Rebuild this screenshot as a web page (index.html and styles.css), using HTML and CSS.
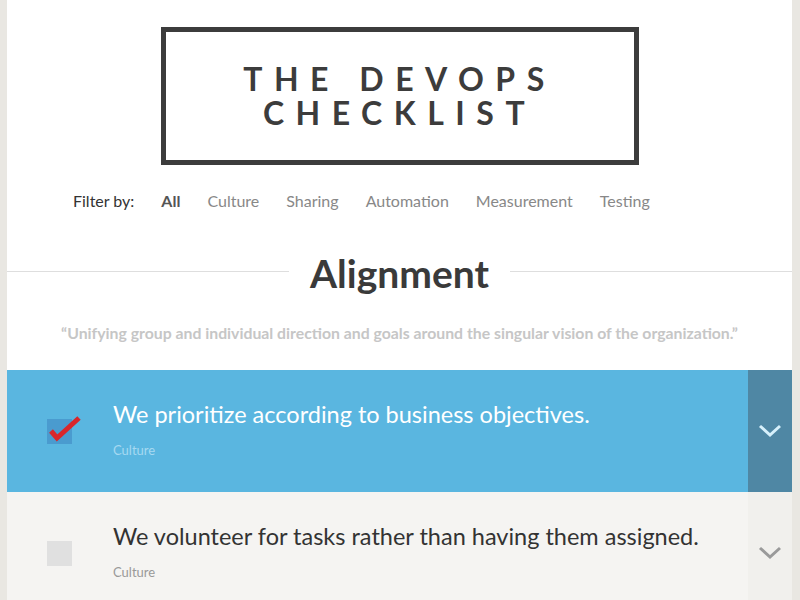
FILE: index.html
```html
<!DOCTYPE html>
<html lang="en">

<head>
    <meta charset="UTF-8">
    <meta name="viewport" content="width=device-width, initial-scale=1.0">
    <title>The DevOps Checklist</title>
    <link rel="stylesheet" href="styles.css">
</head>

<body>

    <div class="page">
        <header>
            <div class="logo-box">
                <h1><span>The DevOps</span><span>Checklist</span></h1>
            </div>
        </header>

        <nav class="filters">
            <span class="filter-label">Filter by:</span>
            <a class="active">All</a>
            <a>Culture</a>
            <a>Sharing</a>
            <a>Automation</a>
            <a>Measurement</a>
            <a>Testing</a>
        </nav>

        <section>
            <div class="section-title">
                <span class="rule"></span>
                <h2>Alignment</h2>
                <span class="rule"></span>
            </div>
            <p class="quote">&ldquo;Unifying group and individual direction and goals around the singular vision of the organization.&rdquo;</p>

            <div class="item checked">
                <div class="check">
                    <span class="box">
                        <svg class="tick" width="36" height="28" viewBox="0 0 36 28">
                            <polyline points="4,15 10,22 32,2" fill="none" stroke="#d9262b" stroke-width="5" />
                        </svg>
                    </span>
                </div>
                <div class="text">
                    <p class="title">We prioritize according to business objectives.</p>
                    <p class="category">Culture</p>
                </div>
                <div class="toggle">
                    <svg width="24" height="14" viewBox="0 0 24 14">
                        <polyline points="2,2 12,11 22,2" fill="none" stroke="currentColor" stroke-width="3" />
                    </svg>
                </div>
            </div>

            <div class="item">
                <div class="check">
                    <span class="box"></span>
                </div>
                <div class="text">
                    <p class="title">We volunteer for tasks rather than having them assigned.</p>
                    <p class="category">Culture</p>
                </div>
                <div class="toggle">
                    <svg width="24" height="14" viewBox="0 0 24 14">
                        <polyline points="2,2 12,11 22,2" fill="none" stroke="currentColor" stroke-width="3" />
                    </svg>
                </div>
            </div>
        </section>
    </div>

</body>

</html>
```

FILE: styles.css
```css
body {
    font-family: 'Lato', sans-serif;
    margin: 0;
    padding: 0;
    background-color: #e9e7e2;
    color: #333;
}

.page {
    width: 785px;
    margin-left: 7px;
    min-height: 600px;
    background-color: #fff;
}

header {
    padding-top: 27px;
    display: flex;
    justify-content: center;
}

.logo-box {
    width: 468px;
    height: 128px;
    border: 5px solid #3c3c3c;
    display: flex;
    align-items: center;
    justify-content: center;
}

h1 {
    margin: 0;
    font-size: 32px;
    font-weight: 700;
    letter-spacing: 11.5px;
    text-transform: uppercase;
    text-align: center;
    color: #3c3c3c;
}

h1 span {
    display: block;
    height: 34px;
    line-height: 34px;
}

.filters {
    display: flex;
    gap: 27px;
    padding: 25px 0 0 66px;
    font-size: 16px;
    line-height: 22px;
}

.filter-label {
    color: #333;
}

.filters a {
    color: #888;
}

.filters a.active {
    font-weight: 700;
    color: #555;
}

.section-title {
    display: flex;
    align-items: center;
    gap: 21px;
    margin-top: 37px;
}

.rule {
    flex: 1;
    height: 1px;
    background-color: #dedede;
    margin-top: -4px;
}

h2 {
    margin: 0;
    font-size: 39px;
    line-height: 48px;
    font-weight: 700;
    color: #3a3a3a;
}

.quote {
    margin: 26px 0 27px;
    text-align: center;
    font-size: 15.8px;
    line-height: 20px;
    font-weight: 700;
    color: #c6c6c6;
}

.item {
    display: flex;
    align-items: stretch;
    background-color: #f5f4f2;
}

.item.checked {
    background-color: #5ab6e0;
}

.check {
    width: 66px;
    padding-left: 40px;
    display: flex;
    align-items: center;
}

.box {
    position: relative;
    width: 25px;
    height: 25px;
    background-color: #e0e0e0;
}

.checked .box {
    background-color: #4a9bcf;
}

.tick {
    position: absolute;
    left: 0;
    top: -3px;
}

.text {
    flex: 1;
    padding: 30px 0 34px;
}

.title {
    margin: 0;
    font-size: 23.5px;
    line-height: 28px;
    color: #333;
}

.checked .title {
    color: #fff;
}

.category {
    margin: 14px 0 0;
    font-size: 13px;
    line-height: 16px;
    color: #999;
}

.checked .category {
    color: #a6d9f1;
}

.toggle {
    width: 44px;
    display: flex;
    align-items: center;
    justify-content: center;
    background-color: #f1f0ed;
    color: #9a9a9a;
}

.checked .toggle {
    background-color: #4f87a4;
    color: #d6f0fb;
}
```
